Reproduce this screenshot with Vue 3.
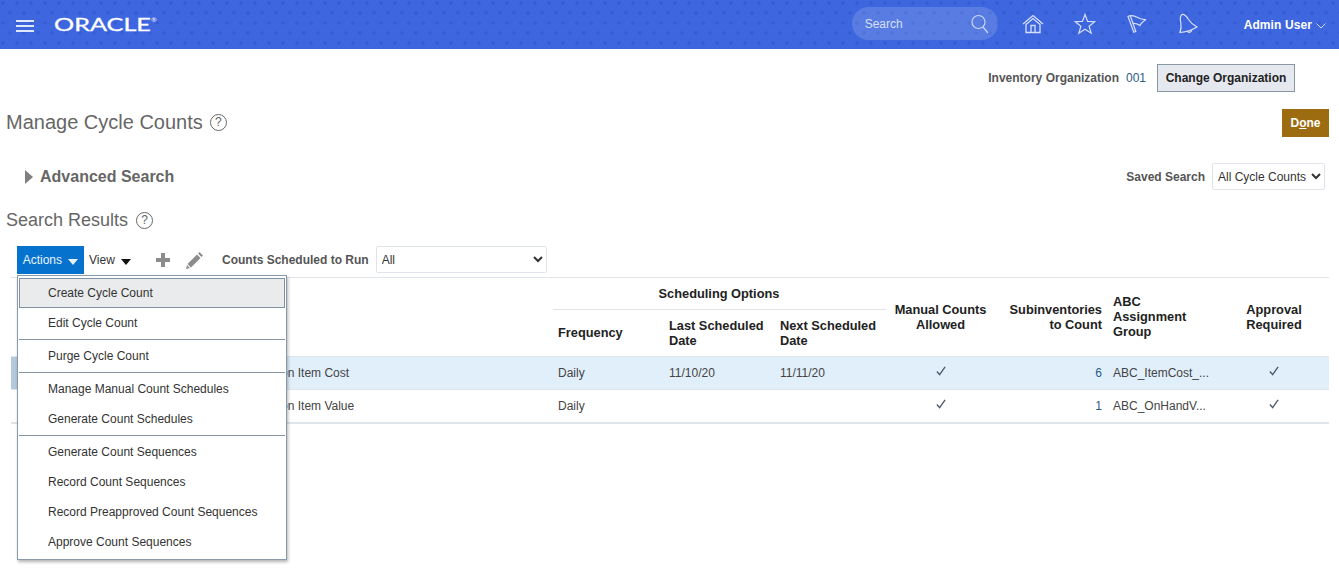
<template>
  <div class="page">
    <header class="topbar">
      <button type="button" class="burger" aria-label="Menu"><span></span><span></span><span></span></button>
      <span class="logo">ORACLE<sup>®</sup></span>
      <div class="topbar-right">
        <div class="search">
          <span>Search</span>
          <svg width="20" height="20" viewBox="0 0 20 20" fill="none" stroke="#c9d5f7" stroke-width="1.2">
            <circle cx="8.5" cy="8" r="6.5" />
            <path d="M13 13l5 6" />
          </svg>
        </div>
        <svg class="nav-icon home" width="22" height="20" viewBox="0 0 22 20" fill="none" stroke="#d5dffa" stroke-width="1.300">
          <path d="M1 10L11 1.500 21 10M4 10.500L11 4.500l7 6M4 9.500V18.500h14V9.500M9 18.500v-7h4v7" />
        </svg>
        <svg class="nav-icon star" width="22" height="22" viewBox="0 0 22 22" fill="none" stroke="#d5dffa" stroke-width="1.200">
          <path d="M11 1.500l2.600 6.900 7.200.3-5.700 4.500 2 7-6.100-4-6.100 4 2-7L1.200 8.700l7.200-.3z" />
        </svg>
        <svg class="nav-icon flag" width="20" height="20" viewBox="0 0 20 20" fill="none" stroke="#d5dffa" stroke-width="1.200">
          <path d="M1 2.500L3.200 1.500l5.600 16-2 .8zM3.400 2C8 0 12 6.500 19 5.500 16 7.500 14 9 13 11.500 10 9.500 8 9 5.500 9.500" />
        </svg>
        <svg class="nav-icon bell" width="20" height="22" viewBox="0 0 20 22" fill="none" stroke="#d5dffa" stroke-width="1.200">
          <path d="M3 1.500C1 3 1 5 1.500 8 2 11 3 14 1 19.500 7 19 13 17 18 14 14 12 11.500 9.500 9.500 6.500 8 4 6 1 3 1.500zM8 18c1 2 4 2 5-1.500" />
        </svg>
        <span class="user">Admin User</span>
        <svg class="user-caret" width="10" height="6" viewBox="0 0 10 6" fill="none" stroke="#cfdaf8"><path d="M.5.500L5 5 9.500.500" /></svg>
      </div>
    </header>

    <div class="org-row">
      <span class="org-label">Inventory Organization</span>
      <span class="org-value">001</span>
      <button type="button" class="btn-org">Change Organization</button>
    </div>

    <div class="title-row">
      <h1>Manage Cycle Counts</h1>
      <span class="help">?</span>
      <button type="button" class="btn-done">D<u>o</u>ne</button>
    </div>

    <div class="adv-row">
      <span class="tri"></span>
      <span class="adv-title">Advanced Search</span>
      <label class="saved-label">Saved Search</label>
      <select class="saved-select">
        <option>All Cycle Counts</option>
      </select>
    </div>

    <div class="results-row">
      <h2>Search Results</h2>
      <span class="help">?</span>
    </div>

    <div class="toolbar">
      <button type="button" class="btn-actions">Actions <i class="caret"></i></button>
      <button type="button" class="btn-view">View <i class="caret dark"></i></button>
      <svg class="plus" width="14" height="14" viewBox="0 0 14 14" fill="#8c8c8c"><path d="M5 0h4v5h5v4H9v5H5V9H0V5h5z" /></svg>
      <svg class="pencil" width="18" height="18" viewBox="0 0 18 18" fill="#8c8c8c">
        <path d="M13.500 1l3.500 3.500L15.500 6 12 2.500zM11 3.500L14.500 7 5 16.500 1.500 13zM1 14l3 3-4 1z" />
      </svg>
      <span class="filter-label">Counts Scheduled to Run</span>
      <select class="filter-select">
        <option>All</option>
      </select>

      <ul class="menu">
        <template v-for="item in menuItems" :key="item.label">
          <li :class="['menu-item', { active: item.active }]">{{ item.label }}</li>
          <li v-if="item.sep" class="menu-sep"></li>
        </template>
      </ul>
    </div>

    <table class="grid">
      <colgroup>
        <col class="c-name" />
        <col v-for="w in colWidths" :key="w.id" :style="{ width: w.px + 'px' }" />
      </colgroup>
      <thead>
        <tr class="head-1">
          <th rowspan="2"></th>
          <th colspan="3" class="group">Scheduling Options</th>
          <th rowspan="2" class="center">Manual Counts<br />Allowed</th>
          <th rowspan="2" class="right">Subinventories<br />to Count</th>
          <th rowspan="2" class="raised">ABC<br />Assignment<br />Group</th>
          <th rowspan="2" class="center">Approval<br />Required</th>
        </tr>
        <tr class="head-2">
          <th class="raised">Frequency</th>
          <th>Last Scheduled<br />Date</th>
          <th>Next Scheduled<br />Date</th>
        </tr>
      </thead>
      <tbody>
        <tr v-for="(row, i) in rows" :key="row.group" :class="{ selected: i === 0 }">
          <td class="name">{{ row.name }}</td>
          <td>Daily</td>
          <td>{{ row.last }}</td>
          <td>{{ row.next }}</td>
          <td class="center"><svg class="check" width="10" height="10" viewBox="0 0 11 11" fill="none" stroke="#4a5a6a" stroke-width="1.500"><path d="M1 6l3 3.500L10 1" /></svg></td>
          <td class="right num">{{ row.subs }}</td>
          <td>{{ row.group }}</td>
          <td class="center"><svg class="check" width="10" height="10" viewBox="0 0 11 11" fill="none" stroke="#4a5a6a" stroke-width="1.500"><path d="M1 6l3 3.500L10 1" /></svg></td>
        </tr>
      </tbody>
    </table>
  </div>
</template>

<script setup>
const menuItems = [
  { label: "Create Cycle Count", active: true },
  { label: "Edit Cycle Count", sep: true },
  { label: "Purge Cycle Count", sep: true },
  { label: "Manage Manual Count Schedules" },
  { label: "Generate Count Schedules", sep: true },
  { label: "Generate Count Sequences" },
  { label: "Record Count Sequences" },
  { label: "Record Preapproved Count Sequences" },
  { label: "Approve Count Sequences" }
];

const colWidths = [
  { id: "freq", px: 111 },
  { id: "last", px: 111 },
  { id: "next", px: 111 },
  { id: "manual", px: 110 },
  { id: "subs", px: 112 },
  { id: "abc", px: 112 },
  { id: "appr", px: 109 }
];

const rows = [
  { name: "Cycle count based on Item Cost", last: "11/10/20", next: "11/11/20", subs: 6, group: "ABC_ItemCost_..." },
  { name: "Cycle count based on Item Value", last: "", next: "", subs: 1, group: "ABC_OnHandV..." }
];
</script>

<style>
html,
body {
  margin: 0;
  background: #fff;
}
</style>

<style scoped>
.page {
  min-height: 574px;
  overflow: hidden;
  font-family: "Liberation Sans", Arial, sans-serif;
  font-size: 12px;
  color: #333;
}

.topbar {
  height: 49px;
  display: flex;
  align-items: center;
  background-color: #3e67df;
  background-image:
    radial-gradient(circle at 3px 3px, #365dd2 1.5px, transparent 2px),
    radial-gradient(circle at 10px 13px, #365dd2 1.5px, transparent 2px);
  background-size: 14px 20px;
}

.burger {
  width: 18px;
  margin: 2px 0 0 16px;
  padding: 0;
  border: 0;
  background: none;
  display: flex;
  flex-direction: column;
  gap: 3px;
}

.burger span {
  display: block;
  height: 2px;
  background: #dfe7fb;
}

.logo {
  margin: -1px 0 0 20px;
  width: 103px;
  font-family: Lato, sans-serif;
  font-size: 18px;
  line-height: 20px;
  color: #fff;
  -webkit-text-stroke: 0.3px #fff;
  transform: scaleX(1.4);
  transform-origin: left center;
  white-space: nowrap;
}

.logo sup {
  font-size: 5px;
  vertical-align: 9px;
  line-height: 0;
  -webkit-text-stroke: 0;
}

.topbar-right {
  margin: 0 0 2px auto;
  display: flex;
  align-items: center;
  padding-right: 13px;
}

.search {
  width: 146px;
  height: 33px;
  box-sizing: border-box;
  padding: 0 8px 0 13px;
  margin-right: 24px;
  border-radius: 17px;
  background: rgba(255, 255, 255, 0.14);
  display: flex;
  align-items: center;
  justify-content: space-between;
  color: #d7e0fa;
}

.nav-icon {
  flex: none;
}

.home { margin-right: 30px; }
.star { margin-right: 31px; }
.flag { margin-right: 32px; }
.bell { margin-right: 45px; }

.user {
  margin: 3px 4px 0 0;
  color: #fff;
  font-weight: 700;
  letter-spacing: 0.1px;
}

.user-caret {
  margin-top: 4px;
}

.org-row {
  height: 28px;
  margin: 15px 44px 0 0;
  display: flex;
  align-items: center;
  justify-content: flex-end;
}

.org-label {
  color: #555;
  font-weight: 700;
}

.org-value {
  margin: 0 11px 0 7px;
  color: #2b5c8a;
}

.btn-org {
  width: 138px;
  height: 28px;
  padding: 0;
  border: 1px solid #8797a6;
  background: #e5e9ef;
  color: #222;
  font: 700 12px "Liberation Sans", Arial, sans-serif;
}

.title-row {
  height: 28px;
  margin: 17px 10px 0 6px;
  display: flex;
  align-items: center;
}

h1 {
  margin: 0 7px 2px 0;
  font-size: 20px;
  font-weight: 400;
  color: #666;
}

h2 {
  margin: 0 8px 0 0;
  font-size: 18px;
  font-weight: 400;
  color: #666;
}

.help {
  width: 15px;
  height: 15px;
  border: 1px solid #666;
  border-radius: 50%;
  display: flex;
  align-items: center;
  justify-content: center;
  color: #666;
  font-size: 12px;
}

.title-row .help {
  margin-bottom: 2px;
}

.btn-done {
  width: 47px;
  height: 28px;
  margin-left: auto;
  padding: 0;
  border: 0;
  background: #9e6c10;
  color: #fff;
  font: 700 12px "Liberation Sans", Arial, sans-serif;
}

.adv-row {
  height: 27px;
  margin: 26px 14px 0 25px;
  display: flex;
  align-items: center;
}

.tri {
  width: 0;
  height: 0;
  border-left: 8px solid #808080;
  border-top: 7px solid transparent;
  border-bottom: 7px solid transparent;
  margin-right: 7px;
}

.adv-title {
  font-size: 16px;
  font-weight: 700;
  color: #666;
}

.saved-label {
  margin-left: auto;
  margin-right: 7px;
  color: #555;
  font-weight: 700;
}

.saved-select,
.filter-select {
  height: 27px;
  border: 1px solid #dfe4ea;
  border-radius: 2px;
  background: #fff;
  color: #333;
  font: 12px "Liberation Sans", Arial, sans-serif;
  padding-left: 1px;
}

.saved-select {
  width: 113px;
}

.results-row {
  height: 22px;
  margin: 19px 0 0 6px;
  display: flex;
  align-items: center;
}

.toolbar {
  position: relative;
  height: 28px;
  margin: 15px 0 0 17px;
  display: flex;
  align-items: center;
}

.btn-actions,
.btn-view {
  height: 28px;
  padding: 0;
  border: 0;
  font: 12px "Liberation Sans", Arial, sans-serif;
}

.btn-actions {
  width: 67px;
  background: #0572ce;
  color: #e8f2fb;
}

.btn-view {
  width: 58px;
  margin-left: 5px;
  text-align: left;
  background: none;
  color: #333;
}

.caret {
  display: inline-block;
  width: 0;
  height: 0;
  margin-left: 3px;
  border-top: 6px solid #e8f2fb;
  border-left: 5px solid transparent;
  border-right: 5px solid transparent;
  vertical-align: -1px;
}

.caret.dark {
  border-top-color: #111;
}

.plus {
  margin: 0 0 0 9px;
}

.pencil {
  margin-left: 16px;
}

.filter-label {
  margin-left: 18px;
  color: #555;
  font-weight: 700;
}

.filter-select {
  width: 171px;
  margin-left: 7px;
  margin-bottom: 1px;
}

.menu {
  position: absolute;
  z-index: 2;
  top: 29px;
  left: 0;
  width: 270px;
  box-sizing: border-box;
  height: 285px;
  margin: 0;
  padding: 2px 1px;
  list-style: none;
  background: #fff;
  border: 1px solid #8a9aa8;
  box-shadow: 1px 2px 3px rgba(0, 0, 0, 0.3);
}

.menu-item {
  height: 30px;
  box-sizing: border-box;
  padding-left: 29px;
  display: flex;
  align-items: center;
  color: #333;
}

.menu-item.active {
  background: #e9ebec;
  border: 1px solid #7f93a5;
  padding-left: 28px;
}

.menu-sep {
  height: 1px;
  margin: 1px 0;
  background: #7f93a5;
}

.grid {
  width: 1318px;
  margin: 3px 0 0 11px;
  table-layout: fixed;
  border-collapse: collapse;
  border-top: 1px solid #dfe4ea;
  border-bottom: 2px solid #dfe4ea;
}

.c-name {
  width: 542px;
}

th {
  padding: 0 6px 0 5px;
  font-weight: 700;
  font-size: 12.800px;
  line-height: 15px;
  color: #222;
  text-align: left;
}

th.raised {
  padding-bottom: 2px;
}

.head-1 {
  height: 32px;
}

.head-2 {
  height: 47px;
}

.head-2 th {
  border-top: 1px solid #dfe4ea;
}

th.group {
  text-align: center;
}

tbody tr {
  height: 33px;
  border-top: 1px solid #dfe4ea;
}

td {
  padding: 0 6px 0 5px;
  color: #444;
  white-space: nowrap;
  overflow: hidden;
}

td.name {
  padding-left: 168px;
}

.selected td {
  background: #e1effb;
}

.selected td.name {
  box-shadow: inset 6px 0 0 #b5c9dc;
}

.center {
  text-align: center;
}

th.center {
  text-align: center;
}

th.right,
.right {
  text-align: right;
}

.num {
  color: #2b5c8a;
}

.check {
  position: relative;
  top: -1px;
}
</style>
